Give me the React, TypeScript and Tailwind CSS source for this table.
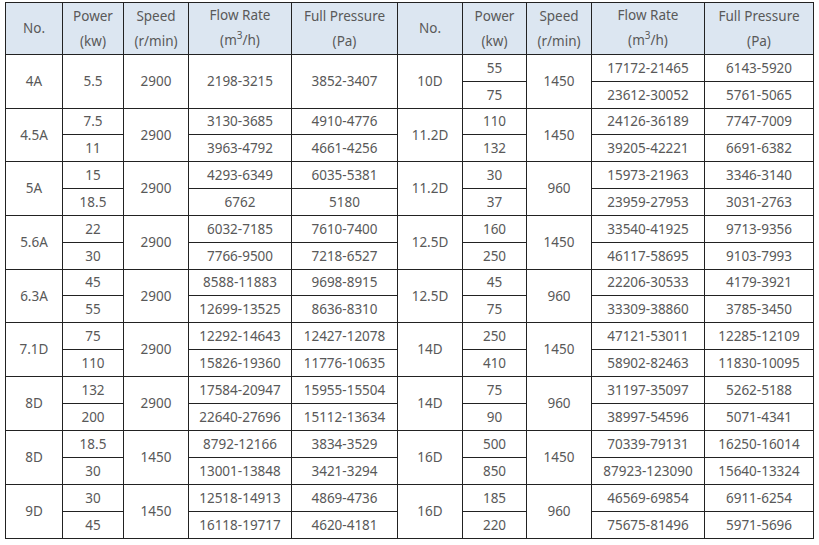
import React from "react";

type Side = {
  no: string;
  power: string[];
  speed: string;
  flow: string[];
  pres: string[];
};

const left: Side[] = [
  { no: "4A", power: ["5.5"], speed: "2900", flow: ["2198-3215"], pres: ["3852-3407"] },
  { no: "4.5A", power: ["7.5", "11"], speed: "2900", flow: ["3130-3685", "3963-4792"], pres: ["4910-4776", "4661-4256"] },
  { no: "5A", power: ["15", "18.5"], speed: "2900", flow: ["4293-6349", "6762"], pres: ["6035-5381", "5180"] },
  { no: "5.6A", power: ["22", "30"], speed: "2900", flow: ["6032-7185", "7766-9500"], pres: ["7610-7400", "7218-6527"] },
  { no: "6.3A", power: ["45", "55"], speed: "2900", flow: ["8588-11883", "12699-13525"], pres: ["9698-8915", "8636-8310"] },
  { no: "7.1D", power: ["75", "110"], speed: "2900", flow: ["12292-14643", "15826-19360"], pres: ["12427-12078", "11776-10635"] },
  { no: "8D", power: ["132", "200"], speed: "2900", flow: ["17584-20947", "22640-27696"], pres: ["15955-15504", "15112-13634"] },
  { no: "8D", power: ["18.5", "30"], speed: "1450", flow: ["8792-12166", "13001-13848"], pres: ["3834-3529", "3421-3294"] },
  { no: "9D", power: ["30", "45"], speed: "1450", flow: ["12518-14913", "16118-19717"], pres: ["4869-4736", "4620-4181"] },
];

const right: Side[] = [
  { no: "10D", power: ["55", "75"], speed: "1450", flow: ["17172-21465", "23612-30052"], pres: ["6143-5920", "5761-5065"] },
  { no: "11.2D", power: ["110", "132"], speed: "1450", flow: ["24126-36189", "39205-42221"], pres: ["7747-7009", "6691-6382"] },
  { no: "11.2D", power: ["30", "37"], speed: "960", flow: ["15973-21963", "23959-27953"], pres: ["3346-3140", "3031-2763"] },
  { no: "12.5D", power: ["160", "250"], speed: "1450", flow: ["33540-41925", "46117-58695"], pres: ["9713-9356", "9103-7993"] },
  { no: "12.5D", power: ["45", "75"], speed: "960", flow: ["22206-30533", "33309-38860"], pres: ["4179-3921", "3785-3450"] },
  { no: "14D", power: ["250", "410"], speed: "1450", flow: ["47121-53011", "58902-82463"], pres: ["12285-12109", "11830-10095"] },
  { no: "14D", power: ["75", "90"], speed: "960", flow: ["31197-35097", "38997-54596"], pres: ["5262-5188", "5071-4341"] },
  { no: "16D", power: ["500", "850"], speed: "1450", flow: ["70339-79131", "87923-123090"], pres: ["16250-16014", "15640-13324"] },
  { no: "16D", power: ["185", "220"], speed: "960", flow: ["46569-69854", "75675-81496"], pres: ["6911-6254", "5971-5696"] },
];

const widths = [57, 61, 65, 103, 106, 65, 64, 65, 113, 109];
const rowH = [
  [27, 27],
  [26, 27],
  [27, 27],
  [27, 27],
  [26, 27],
  [27, 27],
  [27, 27],
  [27, 27],
  [27, 27],
];

const td = "border border-[#222] text-center align-middle p-0";

function Header() {
  const cols: React.ReactNode[] = [];
  for (let s = 0; s < 2; s++) {
    cols.push(
      <th key={`n${s}`} className={`${td} font-normal`}>No.</th>,
      <th key={`p${s}`} className={`${td} font-normal`}>
        <div>Power</div>
        <div>(kw)</div>
      </th>,
      <th key={`s${s}`} className={`${td} font-normal`}>
        <div>Speed</div>
        <div>(r/min)</div>
      </th>,
      <th key={`f${s}`} className={`${td} font-normal`}>
        <div>Flow Rate</div>
        <div>
          (m<span className="text-[10px] relative top-[-6px]">3</span>/h)
        </div>
      </th>,
      <th key={`r${s}`} className={`${td} font-normal`}>
        <div>Full Pressure</div>
        <div>(Pa)</div>
      </th>
    );
  }
  return (
    <tr className="h-[52px] bg-[#dce6f1] leading-[25px]">{cols}</tr>
  );
}

function sideCells(d: Side, sub: number, key: string) {
  const single = d.power.length === 1;
  if (single) {
    if (sub === 1) return [];
    return [
      <td key={key + "n"} rowSpan={2} className={td}>{d.no}</td>,
      <td key={key + "p"} rowSpan={2} className={td}>{d.power[0]}</td>,
      <td key={key + "s"} rowSpan={2} className={td}>{d.speed}</td>,
      <td key={key + "f"} rowSpan={2} className={td}>{d.flow[0]}</td>,
      <td key={key + "r"} rowSpan={2} className={td}>{d.pres[0]}</td>,
    ];
  }
  const cells: React.ReactNode[] = [];
  if (sub === 0) cells.push(<td key={key + "n"} rowSpan={2} className={td}>{d.no}</td>);
  cells.push(<td key={key + "p"} className={td}>{d.power[sub]}</td>);
  if (sub === 0) cells.push(<td key={key + "s"} rowSpan={2} className={td}>{d.speed}</td>);
  cells.push(<td key={key + "f"} className={td}>{d.flow[sub]}</td>);
  cells.push(<td key={key + "r"} className={td}>{d.pres[sub]}</td>);
  return cells;
}

export default function App() {
  const rows: React.ReactNode[] = [];
  left.forEach((l, i) => {
    const r = right[i];
    for (let sub = 0; sub < 2; sub++) {
      rows.push(
        <tr key={`${i}-${sub}`} style={{ height: rowH[i][sub] }}>
          {sideCells(l, sub, `l${i}${sub}`)}
          {sideCells(r, sub, `r${i}${sub}`)}
        </tr>
      );
    }
  });
  return (
    <div className="w-[819px] h-[545px] bg-white pt-[2px] pl-[5px]">
      <table
        className="border-collapse table-fixed text-[13.5px] text-[#595959]"
        style={{ fontFamily: '"Noto Sans", "Open Sans", sans-serif', width: 809 }}
      >
        <colgroup>
          {widths.map((w, i) => (
            <col key={i} style={{ width: w }} />
          ))}
        </colgroup>
        <thead>
          <Header />
        </thead>
        <tbody>{rows}</tbody>
      </table>
    </div>
  );
}
